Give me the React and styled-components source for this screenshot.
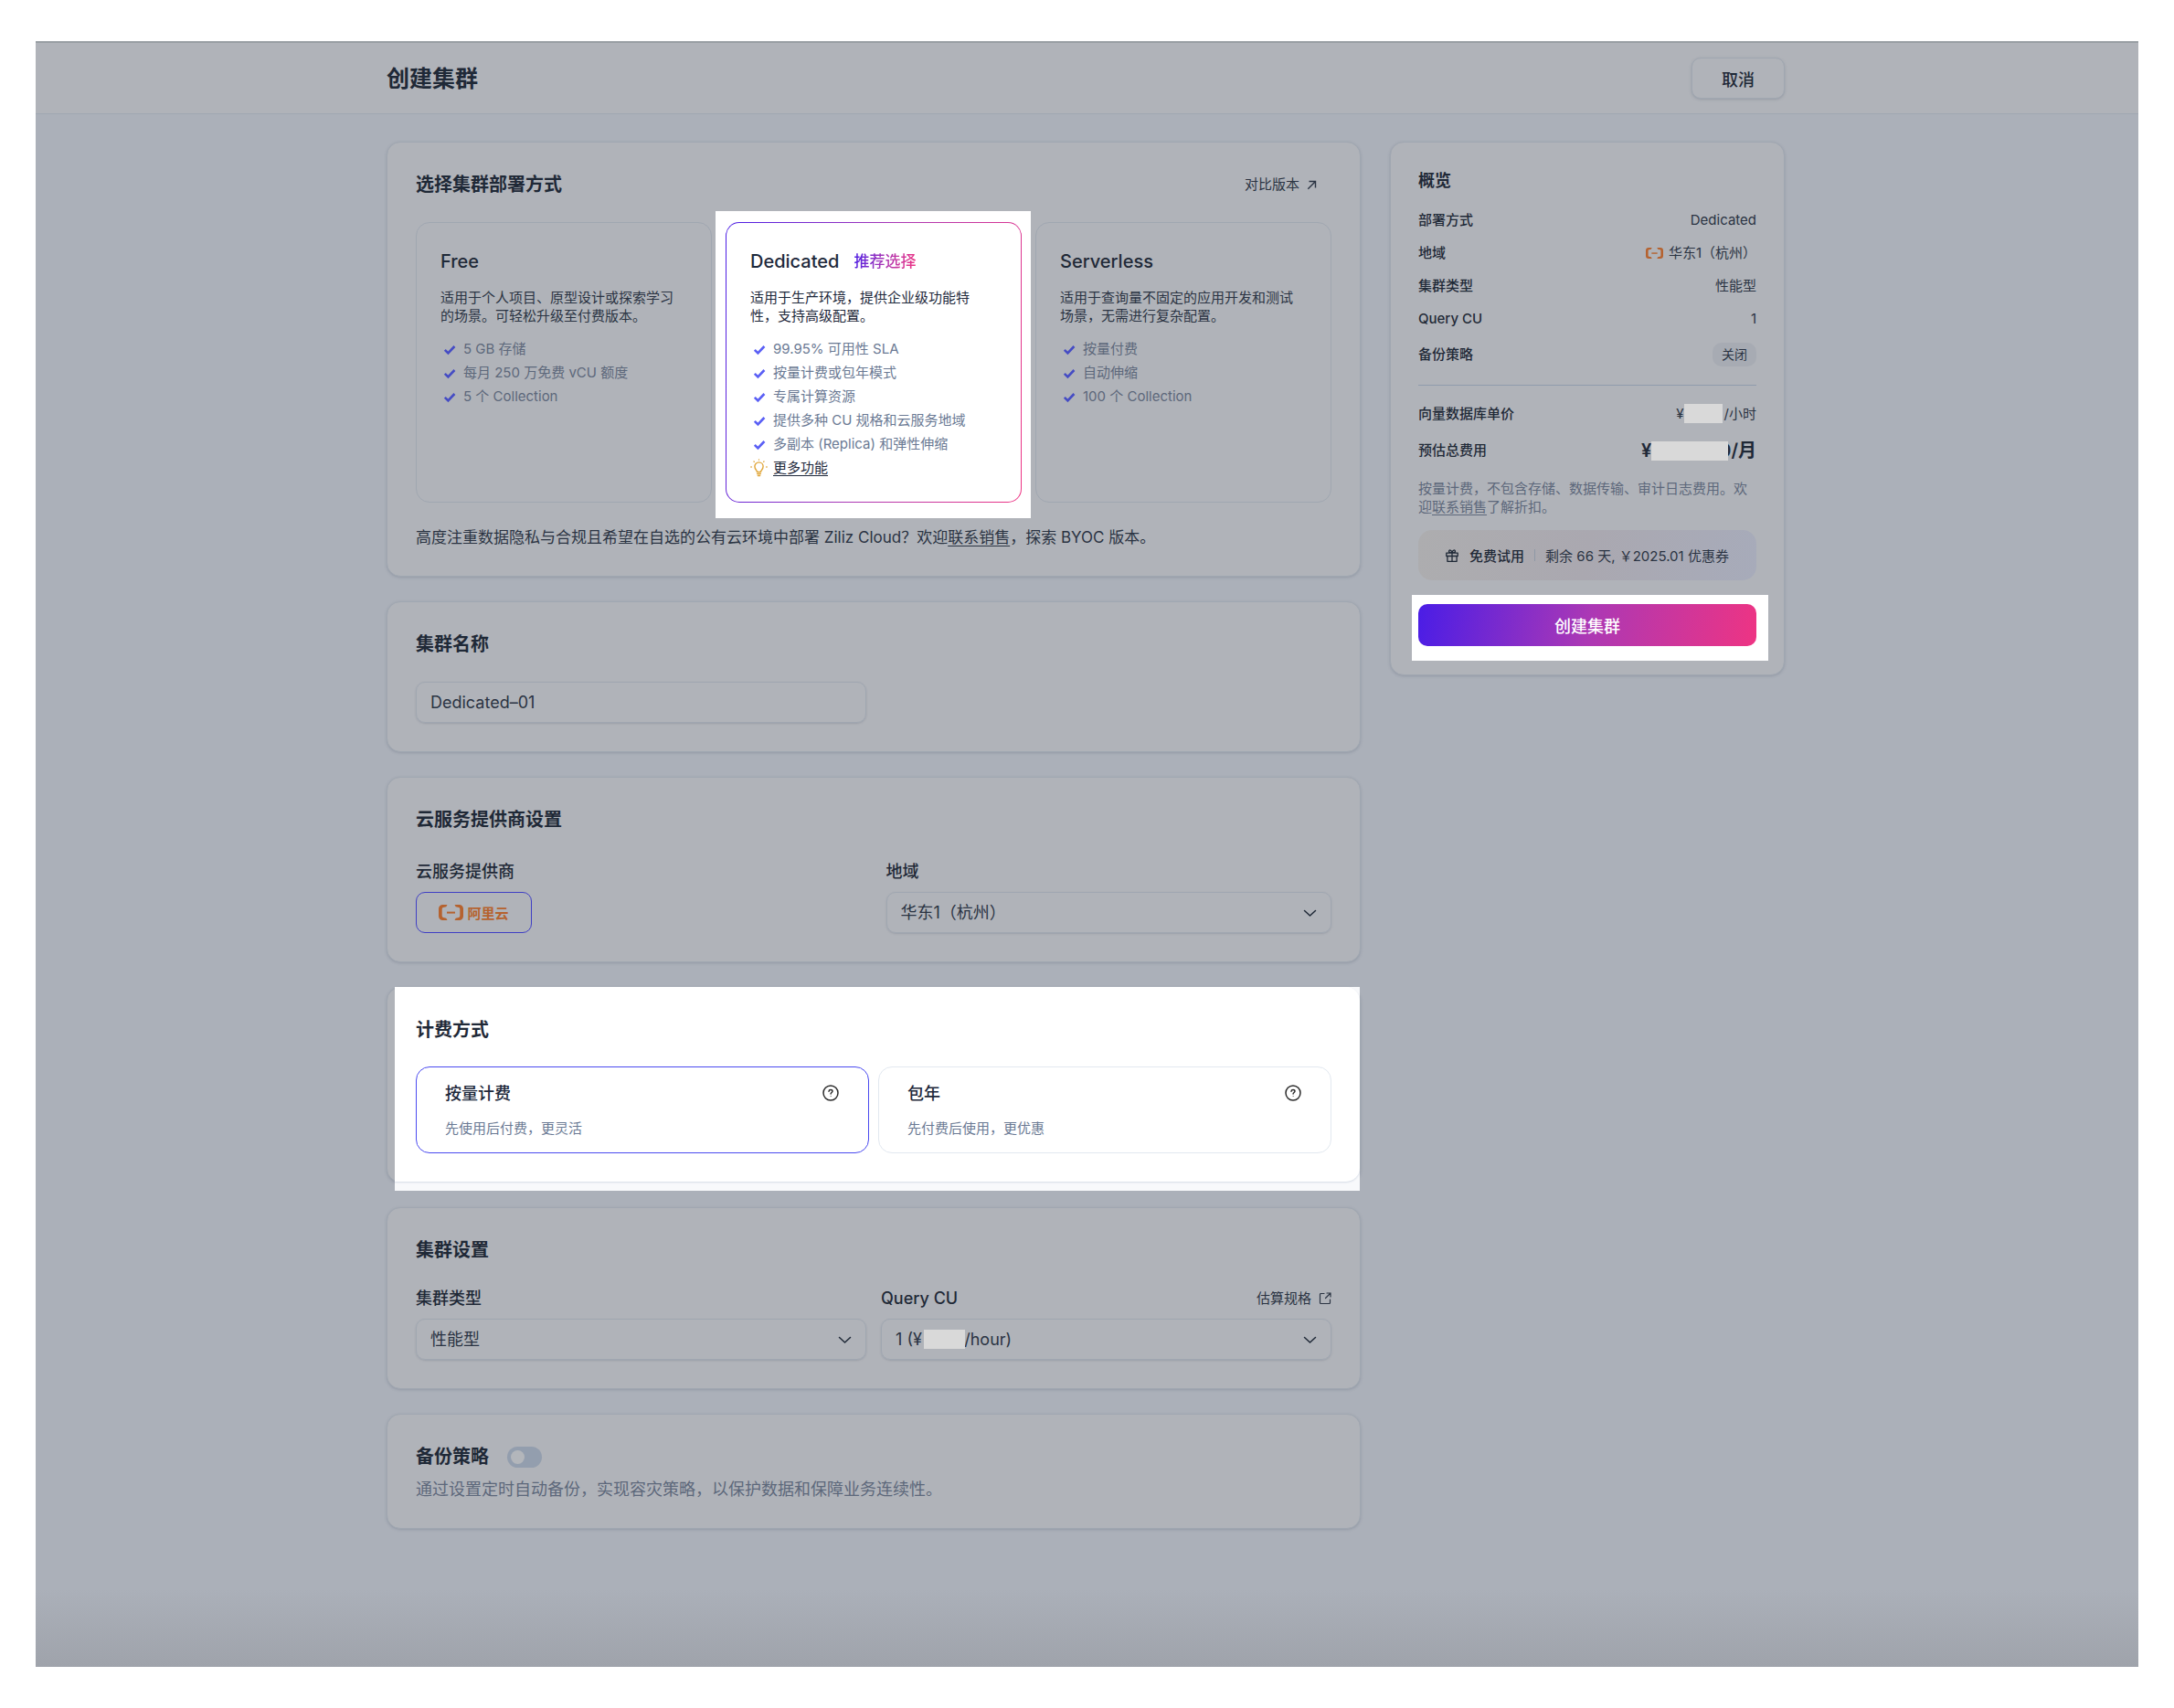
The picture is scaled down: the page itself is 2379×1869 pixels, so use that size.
import React, { useState } from "react";
import styled, { createGlobalStyle, css } from "styled-components";

const colors = {
  page: "#abb0b9",
  card: "#b0b3b9",
  line: "#a0a7b1",
  ink: "#1f2937",
  text: "#2b3443",
  muted: "#5d687b",
  accent: "#3f3fc4",
  orange: "#b5622f",
  mask: "#d9d9d9",
};

const lightColors = {
  card: "#ffffff",
  line: "#e2e8f0",
  ink: "#1e293b",
  text: "#1e293b",
  muted: "#6b7a94",
  accent: "#4b4bf0",
};

const brandGradient = "linear-gradient(100deg, #4a1de6, #ab38b5 50%, #ee3483)";

const GlobalStyle = createGlobalStyle`
  * {
    box-sizing: border-box;
  }

  body {
    margin: 0;
    background: #fff;
    text-spacing-trim: space-all;
  }

  body, button, input, select {
    font-family: Inter, "Noto Sans CJK SC", sans-serif;
  }

  a {
    color: inherit;
  }
`;

const Page = styled.div`
  display: flex;
  min-height: 100vh;
  padding: 45px 39px;
`;

const Window = styled.div`
  flex: 1;
  min-width: 0;
  border-top: 2px solid #989ea3;
  background: linear-gradient(to top, #9fa3ab, ${colors.page} 85px);
  color: ${colors.text};
`;

const Container = styled.div`
  max-width: 1530px;
  margin: 0 auto;
`;

const Header = styled.header`
  padding: 16px 3px 16px 0;
  border-bottom: 1px solid ${colors.line};
  background: ${colors.card};
`;

const HeaderInner = styled(Container)`
  display: flex;
  align-items: center;
  justify-content: space-between;
`;

const PageTitle = styled.h1`
  margin: 0;
  font-size: 25px;
  line-height: 36px;
  font-weight: 600;
  color: ${colors.ink};
`;

const CancelButton = styled.button`
  height: 45px;
  padding: 0 32px;
  border: 1px solid ${colors.line};
  border-radius: 10px;
  background: ${colors.card};
  box-shadow: 0 1px 3px rgba(90, 100, 118, 0.3);
  font-size: 18px;
  font-weight: 500;
  color: ${colors.ink};
`;

const Body = styled.div`
  padding: 30px 3px 60px 0;
`;

const Columns = styled(Container)`
  display: grid;
  grid-template-columns: minmax(0, 1fr) 432px;
  gap: 32px;
  align-items: start;
`;

const Main = styled.main`
  display: flex;
  flex-direction: column;
  gap: 27px;
`;

const Card = styled.section`
  position: relative;
  padding: 32px 31px 31px;
  border: 1px solid ${colors.line};
  border-radius: 15px;
  background: ${colors.card};
  box-shadow: 0 1px 3px rgba(90, 100, 118, 0.3);
`;

const CardHead = styled.div`
  display: flex;
  align-items: center;
  justify-content: space-between;
  margin-bottom: ${(p) => p.$gap || 27}px;
`;

const CardTitle = styled.h2`
  position: relative;
  margin: 0;
  font-size: 20px;
  line-height: 28px;
  font-weight: 600;
  color: ${colors.ink};
`;

const SmallLink = styled.a`
  display: inline-flex;
  align-items: center;
  gap: 8px;
  font-size: 15px;
  line-height: 20px;
  text-decoration: none;
  color: ${colors.text};
`;

const CompareLink = styled(SmallLink)`
  padding-right: 16px;
`;

const HiddenRadio = styled.input`
  position: absolute;
  opacity: 0;
  pointer-events: none;
`;

const Plans = styled.div`
  display: grid;
  grid-template-columns: repeat(3, 1fr);
  gap: 15px;
`;

const PlanSlot = styled.div`
  position: relative;
  display: flex;

  ${(p) =>
    p.$lit &&
    css`
      color: ${lightColors.text};

      &::before {
        content: "";
        position: absolute;
        inset: -12px -10px -17px -11px;
        background: #fff;
      }
    `}
`;

const Plan = styled.label`
  position: relative;
  flex: 1;
  padding: 28px 28px 27px 26px;
  border: 1px solid ${colors.line};
  border-radius: 15px;

  ${(p) =>
    p.$lit &&
    css`
      border-color: transparent;
      background: linear-gradient(#fff, #fff) padding-box,
        ${brandGradient} border-box;
    `}
`;

const PlanHead = styled.div`
  display: flex;
  align-items: center;
  gap: 16px;
  margin-bottom: 16px;
`;

const PlanName = styled.h3`
  margin: 0;
  font-size: 20px;
  line-height: 28px;
  font-weight: 500;
  color: ${(p) => (p.$lit ? lightColors.ink : colors.ink)};
`;

const PlanTag = styled.span`
  font-size: 17px;
  line-height: 24px;
  font-weight: 500;
  background: ${brandGradient};
  background-clip: text;
  color: transparent;
`;

const PlanDesc = styled.p`
  margin: 0 0 16px;
  font-size: 15px;
  line-height: 20px;
`;

const Features = styled.ul`
  display: flex;
  flex-direction: column;
  gap: 6px;
  margin: 0;
  padding: 0;
  list-style: none;
`;

const Feature = styled.li`
  display: flex;
  align-items: center;
  gap: 6px;
  font-size: 15px;
  line-height: 20px;
  color: ${(p) => (p.$lit ? lightColors.muted : colors.muted)};

  svg {
    flex: none;
  }

  a {
    color: ${lightColors.text};
    text-underline-offset: 3px;
  }
`;

const Footnote = styled.p`
  margin: 25px 0 -2px;
  font-size: 17px;
  line-height: 26px;

  a {
    text-underline-offset: 3px;
  }
`;

const controlStyle = css`
  display: block;
  width: 100%;
  height: 45px;
  padding: 0 15px;
  border: 1px solid ${colors.line};
  border-radius: 10px;
  background: transparent;
  box-shadow: 0 1px 2px rgba(90, 100, 118, 0.25);
  font-size: 18px;
  color: ${colors.text};
`;

const NameInput = styled.input`
  ${controlStyle}
  max-width: 493px;
`;

const Fields = styled.div`
  display: grid;
  grid-template-columns: 1fr 1fr;
  gap: ${(p) => p.$gap}px;
`;

const FieldHead = styled.div`
  display: flex;
  align-items: center;
  justify-content: space-between;
  margin-bottom: 9px;
`;

const FieldLabel = styled.label`
  font-size: 18px;
  line-height: 26px;
  font-weight: 500;
  color: ${colors.ink};
`;

const ProviderButton = styled.button`
  display: flex;
  align-items: center;
  justify-content: center;
  gap: 4px;
  width: 127px;
  height: 45px;
  padding: 0;
  border: 1px solid ${colors.accent};
  border-radius: 10px;
  background: transparent;
  font-size: 15px;
  font-weight: 700;
  color: ${colors.orange};
`;

const SelectWrap = styled.div`
  position: relative;

  svg {
    position: absolute;
    top: 19px;
    right: 16px;
    pointer-events: none;
  }
`;

const Select = styled.select`
  ${controlStyle}
  appearance: none;
`;

const SelectMask = styled.span`
  position: absolute;
  top: 12px;
  left: 47px;
  width: 45px;
  height: 21px;
  background: ${colors.mask};
`;

// the billing card sits under a highlight that starts a little inside its left edge
const LitCard = styled(Card)`
  &::before {
    content: "";
    position: absolute;
    inset: -1px 0 -10px 8px;
    background: #f8f9fb;
  }

  &::after {
    content: "";
    position: absolute;
    inset: -1px 0 0 8px;
    border-radius: 0 15px 15px 0;
    background: #fff;
    box-shadow: 0 1px 2px #d5dbe5;
    clip-path: inset(0 0 -10px 0);
  }

  > * {
    position: relative;
    z-index: 1;
  }
`;

const BillingOptions = styled.div`
  display: grid;
  grid-template-columns: 1fr 1fr;
  gap: 10px;
`;

const BillingOption = styled.label`
  display: block;
  padding: 15px 25px 15px 31px;
  border: 1px solid
    ${(p) => (p.$active ? lightColors.accent : lightColors.line)};
  border-radius: 15px;
`;

const BillingHead = styled.span`
  display: flex;
  align-items: center;
  justify-content: space-between;
  margin-bottom: 13px;
  font-size: 18px;
  line-height: 28px;
  font-weight: 500;
  color: ${lightColors.ink};
`;

const HelpButton = styled.button`
  display: flex;
  padding: 0 6px 3px 0;
  border: 0;
  background: none;
  color: #2c2c2c;
`;

const BillingDesc = styled.span`
  display: block;
  font-size: 15px;
  line-height: 22px;
  color: ${lightColors.muted};
`;

const BackupHead = styled.div`
  display: flex;
  align-items: center;
  gap: 20px;
  margin-bottom: 9px;
`;

const Toggle = styled.input`
  appearance: none;
  width: 38px;
  height: 23px;
  margin: 0;
  padding: 4px;
  border-radius: 12px;
  background: #939eae;

  &::before {
    content: "";
    display: block;
    width: 15px;
    height: 15px;
    border-radius: 50%;
    background: #b3b6bb;
  }

  &:checked::before {
    margin-left: 15px;
  }
`;

const BackupDesc = styled.p`
  margin: 0 0 -2px;
  font-size: 18px;
  line-height: 26px;
  color: ${colors.muted};
`;

const Summary = styled.aside`
  padding: 29px 30px 31px;
  border: 1px solid ${colors.line};
  border-radius: 15px;
  background: ${colors.card};
  box-shadow: 0 1px 3px rgba(90, 100, 118, 0.3);
`;

const SummaryTitle = styled.h2`
  margin: 0 0 20px;
  font-size: 18px;
  line-height: 26px;
  font-weight: 600;
  color: ${colors.ink};
`;

const SummaryRows = styled.dl`
  display: flex;
  flex-direction: column;
  gap: 16px;
  margin: 0;
`;

const SummaryRow = styled.div`
  display: flex;
  align-items: center;
  justify-content: space-between;
  font-size: 15px;
  line-height: 20px;

  dt {
    font-weight: 500;
    color: ${colors.ink};
  }

  dd {
    display: flex;
    align-items: center;
    gap: 6px;
    margin: 0;
  }
`;

const Divider = styled.hr`
  height: 1px;
  margin: 20px 0;
  border: 0;
  background: #8f9cac;
`;

const Badge = styled.span`
  padding: 3px 10px;
  border-radius: 10px;
  background: #a7abb3;
  font-size: 14px;
`;

const Price = styled.span`
  display: flex;
  align-items: center;
`;

const TotalPrice = styled(Price)`
  font-size: 20px;
  line-height: 28px;
  font-weight: 600;
  color: ${colors.ink};
`;

// covers the amount; $overlap pulls the last digit under the block
const Mask = styled.span`
  position: relative;
  width: ${(p) => p.$width}px;
  height: 21px;
  margin-right: ${(p) => (p.$overlap ? -p.$overlap : 2)}px;
  background: ${colors.mask};
`;

const SummaryNote = styled.p`
  margin: 18px 0 15px;
  font-size: 15px;
  line-height: 20px;
  color: ${colors.muted};

  a {
    display: inline-block;
    text-underline-offset: 3px;
  }
`;

const Trial = styled.div`
  display: flex;
  align-items: center;
  justify-content: center;
  height: 55px;
  margin-bottom: 26px;
  border-radius: 15px;
  background: linear-gradient(100deg, #adadaf, #aaa8b0 50%, #a7abba);
  font-size: 15px;

  strong {
    margin-left: 12px;
    font-weight: 500;
    color: ${colors.ink};
  }
`;

const TrialDivider = styled.span`
  width: 1px;
  height: 13px;
  margin: 0 11px;
  background: #8f98a6;
`;

const CreateSlot = styled.div`
  position: relative;

  &::before {
    content: "";
    position: absolute;
    inset: -10px -13px -16px -7px;
    background: #fff;
  }
`;

const CreateButton = styled.button`
  position: relative;
  display: block;
  width: 100%;
  height: 46px;
  border: 0;
  border-radius: 10px;
  background: ${brandGradient};
  font-size: 18px;
  font-weight: 500;
  color: #fff;
`;

const CheckIcon = ({ lit }) => (
  <svg width="19" height="20" viewBox="0 0 19 20" fill="none">
    <path
      d="M4.800 10.800l3.600 3.600L15.400 7"
      stroke={lit ? "#5a5ff5" : "#454cc4"}
      strokeWidth="2.600"
    />
  </svg>
);

const BulbIcon = () => (
  <svg
    width="19"
    height="20"
    viewBox="0 0 19 20"
    fill="none"
    stroke="#e0a63a"
    strokeLinecap="round"
  >
    <path
      d="M7.5 14.5c0-2-2.600-2.800-2.600-6a4.600 4.600 0 0 1 9.200 0c0 3.200-2.600 4-2.600 6z"
      strokeWidth="1.400"
    />
    <path d="M7.700 16.600h3.600M8.400 18.600h2.200" strokeWidth="1.500" />
    <path
      d="M9.500.8v.4M4 3l.3.300M15 3l-.3.300M.8 9h.5M17.700 9h.5"
      strokeWidth="1.300"
    />
  </svg>
);

const ArrowIcon = () => (
  <svg
    width="11"
    height="11"
    viewBox="0 0 11 11"
    fill="none"
    stroke="currentColor"
    strokeWidth="1.4"
  >
    <path d="M1.300 9.700L9.500 1.500M2.500 1.500h7v7" />
  </svg>
);

const ExternalIcon = () => (
  <svg
    width="14"
    height="14"
    viewBox="0 0 14 14"
    fill="none"
    stroke="currentColor"
    strokeWidth="1.2"
    strokeLinecap="round"
    strokeLinejoin="round"
  >
    <path d="M6 1.500H2.500a1 1 0 0 0-1 1v9a1 1 0 0 0 1 1h9a1 1 0 0 0 1-1V8M9 1h4v4M13 1L7.500 6.500" />
  </svg>
);

const ChevronIcon = () => (
  <svg
    width="15"
    height="9"
    viewBox="0 0 15 9"
    fill="none"
    stroke={colors.ink}
    strokeWidth="1.5"
    strokeLinecap="round"
    strokeLinejoin="round"
  >
    <path d="M1.500 1.500l6 5.500 6-5.500" />
  </svg>
);

const HelpIcon = () => (
  <svg
    width="20"
    height="20"
    viewBox="0 0 20 20"
    fill="none"
    stroke="currentColor"
    strokeWidth="1.5"
    strokeLinecap="round"
  >
    <circle cx="10" cy="10" r="8" />
    <path d="M8 8.200c.1-1.200.9-1.800 2-1.800s2 .7 2 1.700c0 1.400-1.900 1.500-1.900 3" />
    <circle cx="10.100" cy="13.600" r=".5" fill="currentColor" stroke="none" />
  </svg>
);

const GiftIcon = () => (
  <svg
    width="14"
    height="14"
    viewBox="0 0 14 14"
    fill="none"
    stroke={colors.ink}
    strokeWidth="1.3"
    strokeLinejoin="round"
  >
    <path d="M.8 4.200h12.400v3.300H.8zM1.900 7.500v5.800h10.200V7.500M7 4.200v9.100M7 4C6 4 3.500 3.900 3.500 2.300 3.500.5 6.500.2 7 4zM7 4c1 0 3.500-.1 3.500-1.700C10.500.5 7.500.2 7 4z" />
  </svg>
);

const AlibabaLogo = ({ width }) => (
  <svg
    width={width}
    height={Math.round((width * 17) / 27)}
    viewBox="0 0 27 17"
    fill="#b5622f"
  >
    <path d="M9.500 0H4.500A4.500 4.500 0 0 0 0 4.500v8A4.500 4.500 0 0 0 4.500 17h5l-1.200-2.300-3.300-.8a1.600 1.600 0 0 1-1.300-1.600V4.700A1.600 1.600 0 0 1 5 3.100l3.300-.8z" />
    <path d="M17.500 0h5A4.500 4.500 0 0 1 27 4.500v8a4.500 4.500 0 0 1-4.500 4.500h-5l1.200-2.300 3.300-.8a1.600 1.600 0 0 0 1.300-1.600V4.700A1.600 1.600 0 0 0 22 3.100l-3.300-.8z" />
    <path d="M9 7.600h9v2H9z" />
  </svg>
);

const plans = [
  {
    name: "Free",
    desc: "适用于个人项目、原型设计或探索学习的场景。可轻松升级至付费版本。",
    features: ["5 GB 存储", "每月 250 万免费 vCU 额度", "5 个 Collection"],
  },
  {
    name: "Dedicated",
    tag: "推荐选择",
    desc: "适用于生产环境，提供企业级功能特性，支持高级配置。",
    features: [
      "99.95% 可用性 SLA",
      "按量计费或包年模式",
      "专属计算资源",
      "提供多种 CU 规格和云服务地域",
      "多副本 (Replica) 和弹性伸缩",
    ],
    more: "更多功能",
  },
  {
    name: "Serverless",
    desc: "适用于查询量不固定的应用开发和测试场景，无需进行复杂配置。",
    features: ["按量付费", "自动伸缩", "100 个 Collection"],
  },
];

const billings = [
  { name: "按量计费", desc: "先使用后付费，更灵活" },
  { name: "包年", desc: "先付费后使用，更优惠" },
];

const SelectBox = ({ id, option, masked }) => (
  <SelectWrap>
    <Select id={id}>
      <option>{option}</option>
    </Select>
    {masked && <SelectMask />}
    <ChevronIcon />
  </SelectWrap>
);

const App = () => {
  const [plan, setPlan] = useState("Dedicated");
  const [billing, setBilling] = useState("按量计费");

  return (
    <>
      <GlobalStyle />
      <Page>
        <Window>
          <Header>
            <HeaderInner>
              <PageTitle>创建集群</PageTitle>
              <CancelButton type="button">取消</CancelButton>
            </HeaderInner>
          </Header>

          <Body>
            <Columns>
              <Main>
                <Card>
                  <CardHead>
                    <CardTitle>选择集群部署方式</CardTitle>
                    <CompareLink href="#compare">
                      对比版本 <ArrowIcon />
                    </CompareLink>
                  </CardHead>
                  <Plans>
                    {plans.map((p) => {
                      const lit = plan === p.name;
                      return (
                        <PlanSlot key={p.name} $lit={lit}>
                          <Plan $lit={lit}>
                            <HiddenRadio
                              type="radio"
                              name="plan"
                              checked={lit}
                              onChange={() => setPlan(p.name)}
                            />
                            <PlanHead>
                              <PlanName $lit={lit}>{p.name}</PlanName>
                              {p.tag && <PlanTag>{p.tag}</PlanTag>}
                            </PlanHead>
                            <PlanDesc>{p.desc}</PlanDesc>
                            <Features>
                              {p.features.map((f) => (
                                <Feature key={f} $lit={lit}>
                                  <CheckIcon lit={lit} />
                                  {f}
                                </Feature>
                              ))}
                              {p.more && (
                                <Feature>
                                  <BulbIcon />
                                  <a href="#more">{p.more}</a>
                                </Feature>
                              )}
                            </Features>
                          </Plan>
                        </PlanSlot>
                      );
                    })}
                  </Plans>
                  <Footnote>
                    高度注重数据隐私与合规且希望在自选的公有云环境中部署 Ziliz
                    Cloud？欢迎<a href="#sales">联系销售</a>，探索 BYOC 版本。
                  </Footnote>
                </Card>

                <Card>
                  <CardHead>
                    <CardTitle as="label" htmlFor="name">
                      集群名称
                    </CardTitle>
                  </CardHead>
                  <NameInput id="name" defaultValue="Dedicated–01" />
                </Card>

                <Card>
                  <CardHead $gap={30}>
                    <CardTitle>云服务提供商设置</CardTitle>
                  </CardHead>
                  <Fields $gap={27}>
                    <div>
                      <FieldHead>
                        <FieldLabel htmlFor="provider">云服务提供商</FieldLabel>
                      </FieldHead>
                      <ProviderButton id="provider" type="button">
                        <AlibabaLogo width={27} />
                        阿里云
                      </ProviderButton>
                    </div>
                    <div>
                      <FieldHead>
                        <FieldLabel htmlFor="region">地域</FieldLabel>
                      </FieldHead>
                      <SelectBox id="region" option="华东1（杭州）" />
                    </div>
                  </Fields>
                </Card>

                <LitCard>
                  <CardHead $gap={26}>
                    <CardTitle>计费方式</CardTitle>
                  </CardHead>
                  <BillingOptions>
                    {billings.map((b) => (
                      <BillingOption key={b.name} $active={billing === b.name}>
                        <HiddenRadio
                          type="radio"
                          name="billing"
                          checked={billing === b.name}
                          onChange={() => setBilling(b.name)}
                        />
                        <BillingHead>
                          {b.name}
                          <HelpButton type="button" aria-label={b.name}>
                            <HelpIcon />
                          </HelpButton>
                        </BillingHead>
                        <BillingDesc>{b.desc}</BillingDesc>
                      </BillingOption>
                    ))}
                  </BillingOptions>
                </LitCard>

                <Card>
                  <CardHead $gap={26}>
                    <CardTitle>集群设置</CardTitle>
                  </CardHead>
                  <Fields $gap={16}>
                    <div>
                      <FieldHead>
                        <FieldLabel htmlFor="type">集群类型</FieldLabel>
                      </FieldHead>
                      <SelectBox id="type" option="性能型" />
                    </div>
                    <div>
                      <FieldHead>
                        <FieldLabel htmlFor="cu">Query CU</FieldLabel>
                        <SmallLink href="#sizing">
                          估算规格 <ExternalIcon />
                        </SmallLink>
                      </FieldHead>
                      <SelectBox
                        id="cu"
                        option={"1 (¥\u2007\u2007\u20070/hour)"}
                        masked
                      />
                    </div>
                  </Fields>
                </Card>

                <Card>
                  <BackupHead>
                    <CardTitle as="label" htmlFor="backup">
                      备份策略
                    </CardTitle>
                    <Toggle id="backup" type="checkbox" role="switch" />
                  </BackupHead>
                  <BackupDesc>
                    通过设置定时自动备份，实现容灾策略，以保护数据和保障业务连续性。
                  </BackupDesc>
                </Card>
              </Main>

              <Summary>
                <SummaryTitle>概览</SummaryTitle>
                <SummaryRows>
                  <SummaryRow>
                    <dt>部署方式</dt>
                    <dd>{plan}</dd>
                  </SummaryRow>
                  <SummaryRow>
                    <dt>地域</dt>
                    <dd>
                      <AlibabaLogo width={19} />
                      华东1（杭州）
                    </dd>
                  </SummaryRow>
                  <SummaryRow>
                    <dt>集群类型</dt>
                    <dd>性能型</dd>
                  </SummaryRow>
                  <SummaryRow>
                    <dt>Query CU</dt>
                    <dd>1</dd>
                  </SummaryRow>
                  <SummaryRow>
                    <dt>备份策略</dt>
                    <dd>
                      <Badge>关闭</Badge>
                    </dd>
                  </SummaryRow>
                </SummaryRows>
                <Divider />
                <SummaryRows>
                  <SummaryRow>
                    <dt>向量数据库单价</dt>
                    <dd>
                      <Price>
                        ¥<Mask $width={42} />
                        /小时
                      </Price>
                    </dd>
                  </SummaryRow>
                  <SummaryRow>
                    <dt>预估总费用</dt>
                    <dd>
                      <TotalPrice>
                        ¥<Mask $width={84} $overlap={10} />
                        0/月
                      </TotalPrice>
                    </dd>
                  </SummaryRow>
                </SummaryRows>
                <SummaryNote>
                  按量计费，不包含存储、数据传输、审计日志费用。欢迎
                  <a href="#sales">联系销售</a>了解折扣。
                </SummaryNote>
                <Trial>
                  <GiftIcon />
                  <strong>免费试用</strong>
                  <TrialDivider />
                  剩余 66 天, ￥2025.01 优惠券
                </Trial>
                <CreateSlot>
                  <CreateButton type="button">创建集群</CreateButton>
                </CreateSlot>
              </Summary>
            </Columns>
          </Body>
        </Window>
      </Page>
    </>
  );
};

export default App;
